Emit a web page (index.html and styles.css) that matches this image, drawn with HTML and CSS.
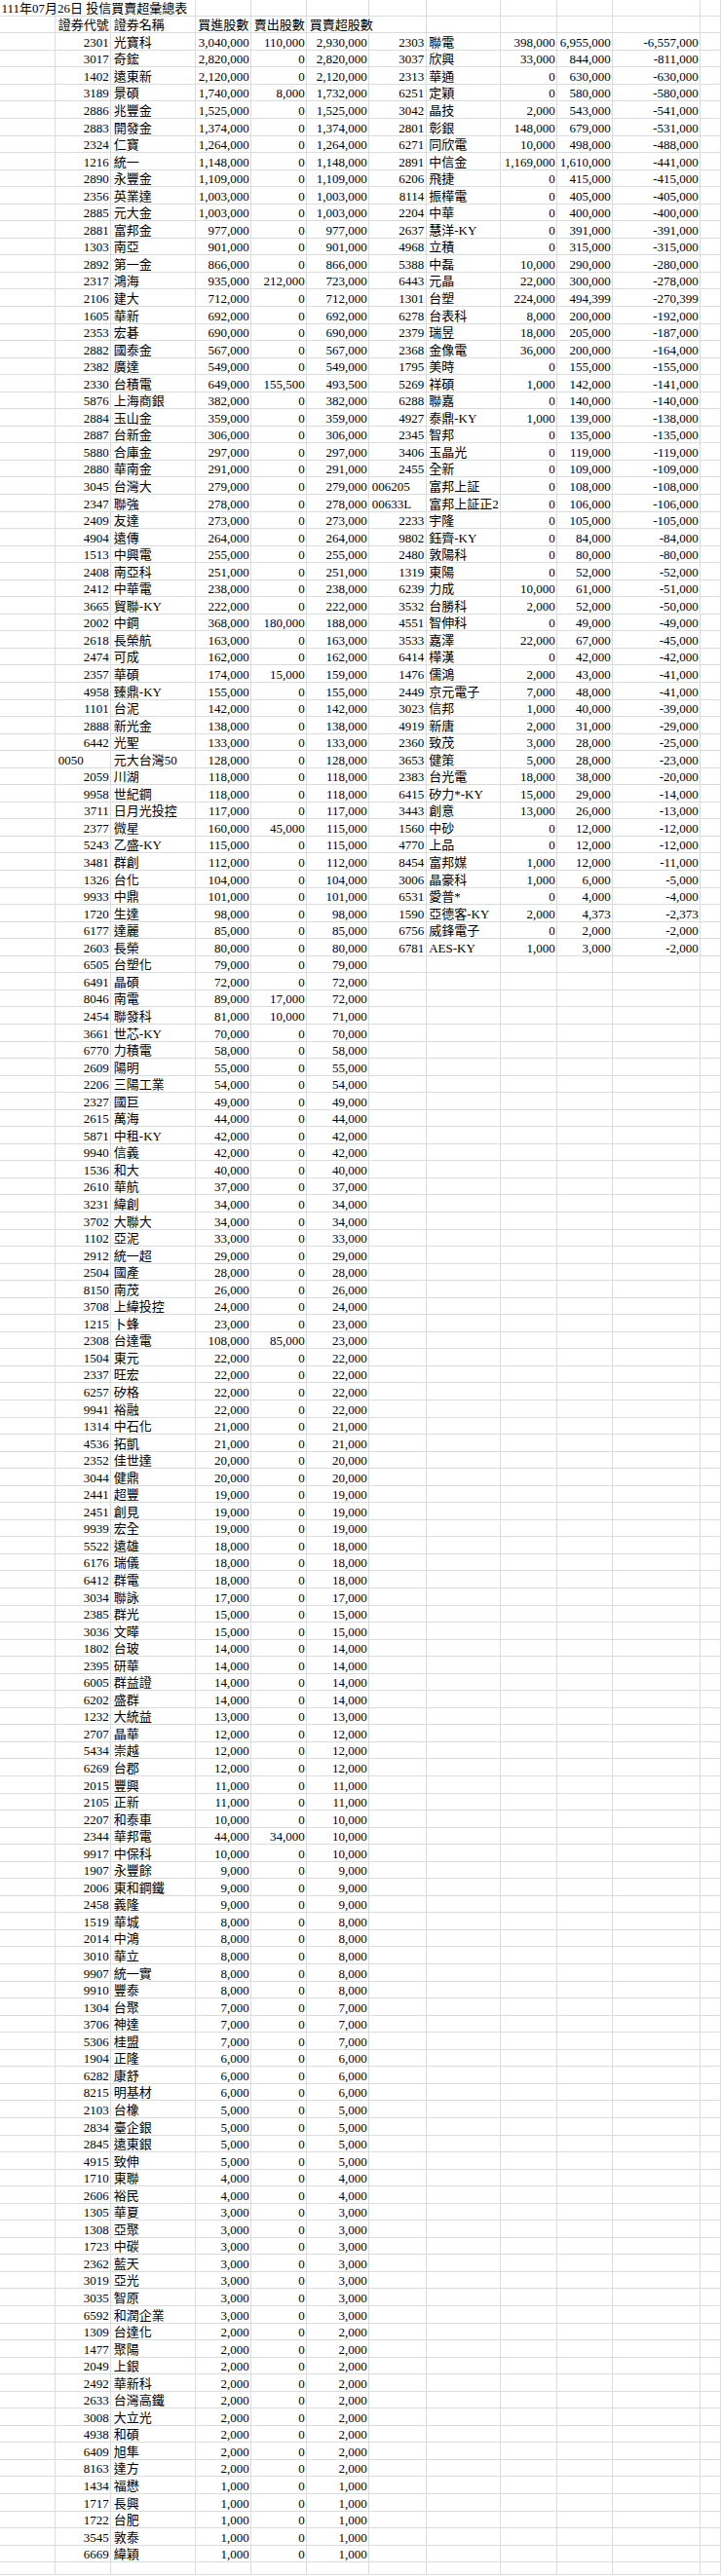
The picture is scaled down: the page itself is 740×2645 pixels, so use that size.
FILE: index.html
```html
<!DOCTYPE html>
<html lang="zh-Hant">
<head>
<meta charset="utf-8">
<title>111年07月26日 投信買賣超彙總表</title>
<link rel="stylesheet" href="styles.css">
</head>
<body>
<div class="sheet">
<span class="title">111年07月26日 投信買賣超彙總表</span><span></span><span></span><span></span><span></span><span></span><span></span><span></span><span></span><span></span>
<span></span><span class="t">證券代號</span><span class="t">證券名稱</span><span class="t">買進股數</span><span class="t">賣出股數</span><span class="t hw">買賣超股數</span><span></span><span></span><span></span><span></span><span></span>
<span></span><span>2301</span><span class="t">光寶科</span><span>3,040,000</span><span>110,000</span><span>2,930,000</span><span>2303</span><span class="t">聯電</span><span>398,000</span><span>6,955,000</span><span>-6,557,000</span><span></span>
<span></span><span>3017</span><span class="t">奇鋐</span><span>2,820,000</span><span>0</span><span>2,820,000</span><span>3037</span><span class="t">欣興</span><span>33,000</span><span>844,000</span><span>-811,000</span><span></span>
<span></span><span>1402</span><span class="t">遠東新</span><span>2,120,000</span><span>0</span><span>2,120,000</span><span>2313</span><span class="t">華通</span><span>0</span><span>630,000</span><span>-630,000</span><span></span>
<span></span><span>3189</span><span class="t">景碩</span><span>1,740,000</span><span>8,000</span><span>1,732,000</span><span>6251</span><span class="t">定穎</span><span>0</span><span>580,000</span><span>-580,000</span><span></span>
<span></span><span>2886</span><span class="t">兆豐金</span><span>1,525,000</span><span>0</span><span>1,525,000</span><span>3042</span><span class="t">晶技</span><span>2,000</span><span>543,000</span><span>-541,000</span><span></span>
<span></span><span>2883</span><span class="t">開發金</span><span>1,374,000</span><span>0</span><span>1,374,000</span><span>2801</span><span class="t">彰銀</span><span>148,000</span><span>679,000</span><span>-531,000</span><span></span>
<span></span><span>2324</span><span class="t">仁寶</span><span>1,264,000</span><span>0</span><span>1,264,000</span><span>6271</span><span class="t">同欣電</span><span>10,000</span><span>498,000</span><span>-488,000</span><span></span>
<span></span><span>1216</span><span class="t">統一</span><span>1,148,000</span><span>0</span><span>1,148,000</span><span>2891</span><span class="t">中信金</span><span>1,169,000</span><span>1,610,000</span><span>-441,000</span><span></span>
<span></span><span>2890</span><span class="t">永豐金</span><span>1,109,000</span><span>0</span><span>1,109,000</span><span>6206</span><span class="t">飛捷</span><span>0</span><span>415,000</span><span>-415,000</span><span></span>
<span></span><span>2356</span><span class="t">英業達</span><span>1,003,000</span><span>0</span><span>1,003,000</span><span>8114</span><span class="t">振樺電</span><span>0</span><span>405,000</span><span>-405,000</span><span></span>
<span></span><span>2885</span><span class="t">元大金</span><span>1,003,000</span><span>0</span><span>1,003,000</span><span>2204</span><span class="t">中華</span><span>0</span><span>400,000</span><span>-400,000</span><span></span>
<span></span><span>2881</span><span class="t">富邦金</span><span>977,000</span><span>0</span><span>977,000</span><span>2637</span><span class="t">慧洋-KY</span><span>0</span><span>391,000</span><span>-391,000</span><span></span>
<span></span><span>1303</span><span class="t">南亞</span><span>901,000</span><span>0</span><span>901,000</span><span>4968</span><span class="t">立積</span><span>0</span><span>315,000</span><span>-315,000</span><span></span>
<span></span><span>2892</span><span class="t">第一金</span><span>866,000</span><span>0</span><span>866,000</span><span>5388</span><span class="t">中磊</span><span>10,000</span><span>290,000</span><span>-280,000</span><span></span>
<span></span><span>2317</span><span class="t">鴻海</span><span>935,000</span><span>212,000</span><span>723,000</span><span>6443</span><span class="t">元晶</span><span>22,000</span><span>300,000</span><span>-278,000</span><span></span>
<span></span><span>2106</span><span class="t">建大</span><span>712,000</span><span>0</span><span>712,000</span><span>1301</span><span class="t">台塑</span><span>224,000</span><span>494,399</span><span>-270,399</span><span></span>
<span></span><span>1605</span><span class="t">華新</span><span>692,000</span><span>0</span><span>692,000</span><span>6278</span><span class="t">台表科</span><span>8,000</span><span>200,000</span><span>-192,000</span><span></span>
<span></span><span>2353</span><span class="t">宏碁</span><span>690,000</span><span>0</span><span>690,000</span><span>2379</span><span class="t">瑞昱</span><span>18,000</span><span>205,000</span><span>-187,000</span><span></span>
<span></span><span>2882</span><span class="t">國泰金</span><span>567,000</span><span>0</span><span>567,000</span><span>2368</span><span class="t">金像電</span><span>36,000</span><span>200,000</span><span>-164,000</span><span></span>
<span></span><span>2382</span><span class="t">廣達</span><span>549,000</span><span>0</span><span>549,000</span><span>1795</span><span class="t">美時</span><span>0</span><span>155,000</span><span>-155,000</span><span></span>
<span></span><span>2330</span><span class="t">台積電</span><span>649,000</span><span>155,500</span><span>493,500</span><span>5269</span><span class="t">祥碩</span><span>1,000</span><span>142,000</span><span>-141,000</span><span></span>
<span></span><span>5876</span><span class="t">上海商銀</span><span>382,000</span><span>0</span><span>382,000</span><span>6288</span><span class="t">聯嘉</span><span>0</span><span>140,000</span><span>-140,000</span><span></span>
<span></span><span>2884</span><span class="t">玉山金</span><span>359,000</span><span>0</span><span>359,000</span><span>4927</span><span class="t">泰鼎-KY</span><span>1,000</span><span>139,000</span><span>-138,000</span><span></span>
<span></span><span>2887</span><span class="t">台新金</span><span>306,000</span><span>0</span><span>306,000</span><span>2345</span><span class="t">智邦</span><span>0</span><span>135,000</span><span>-135,000</span><span></span>
<span></span><span>5880</span><span class="t">合庫金</span><span>297,000</span><span>0</span><span>297,000</span><span>3406</span><span class="t">玉晶光</span><span>0</span><span>119,000</span><span>-119,000</span><span></span>
<span></span><span>2880</span><span class="t">華南金</span><span>291,000</span><span>0</span><span>291,000</span><span>2455</span><span class="t">全新</span><span>0</span><span>109,000</span><span>-109,000</span><span></span>
<span></span><span>3045</span><span class="t">台灣大</span><span>279,000</span><span>0</span><span>279,000</span><span class="t">006205</span><span class="t">富邦上証</span><span>0</span><span>108,000</span><span>-108,000</span><span></span>
<span></span><span>2347</span><span class="t">聯強</span><span>278,000</span><span>0</span><span>278,000</span><span class="t">00633L</span><span class="t">富邦上証正2</span><span>0</span><span>106,000</span><span>-106,000</span><span></span>
<span></span><span>2409</span><span class="t">友達</span><span>273,000</span><span>0</span><span>273,000</span><span>2233</span><span class="t">宇隆</span><span>0</span><span>105,000</span><span>-105,000</span><span></span>
<span></span><span>4904</span><span class="t">遠傳</span><span>264,000</span><span>0</span><span>264,000</span><span>9802</span><span class="t">鈺齊-KY</span><span>0</span><span>84,000</span><span>-84,000</span><span></span>
<span></span><span>1513</span><span class="t">中興電</span><span>255,000</span><span>0</span><span>255,000</span><span>2480</span><span class="t">敦陽科</span><span>0</span><span>80,000</span><span>-80,000</span><span></span>
<span></span><span>2408</span><span class="t">南亞科</span><span>251,000</span><span>0</span><span>251,000</span><span>1319</span><span class="t">東陽</span><span>0</span><span>52,000</span><span>-52,000</span><span></span>
<span></span><span>2412</span><span class="t">中華電</span><span>238,000</span><span>0</span><span>238,000</span><span>6239</span><span class="t">力成</span><span>10,000</span><span>61,000</span><span>-51,000</span><span></span>
<span></span><span>3665</span><span class="t">貿聯-KY</span><span>222,000</span><span>0</span><span>222,000</span><span>3532</span><span class="t">台勝科</span><span>2,000</span><span>52,000</span><span>-50,000</span><span></span>
<span></span><span>2002</span><span class="t">中鋼</span><span>368,000</span><span>180,000</span><span>188,000</span><span>4551</span><span class="t">智伸科</span><span>0</span><span>49,000</span><span>-49,000</span><span></span>
<span></span><span>2618</span><span class="t">長榮航</span><span>163,000</span><span>0</span><span>163,000</span><span>3533</span><span class="t">嘉澤</span><span>22,000</span><span>67,000</span><span>-45,000</span><span></span>
<span></span><span>2474</span><span class="t">可成</span><span>162,000</span><span>0</span><span>162,000</span><span>6414</span><span class="t">樺漢</span><span>0</span><span>42,000</span><span>-42,000</span><span></span>
<span></span><span>2357</span><span class="t">華碩</span><span>174,000</span><span>15,000</span><span>159,000</span><span>1476</span><span class="t">儒鴻</span><span>2,000</span><span>43,000</span><span>-41,000</span><span></span>
<span></span><span>4958</span><span class="t">臻鼎-KY</span><span>155,000</span><span>0</span><span>155,000</span><span>2449</span><span class="t">京元電子</span><span>7,000</span><span>48,000</span><span>-41,000</span><span></span>
<span></span><span>1101</span><span class="t">台泥</span><span>142,000</span><span>0</span><span>142,000</span><span>3023</span><span class="t">信邦</span><span>1,000</span><span>40,000</span><span>-39,000</span><span></span>
<span></span><span>2888</span><span class="t">新光金</span><span>138,000</span><span>0</span><span>138,000</span><span>4919</span><span class="t">新唐</span><span>2,000</span><span>31,000</span><span>-29,000</span><span></span>
<span></span><span>6442</span><span class="t">光聖</span><span>133,000</span><span>0</span><span>133,000</span><span>2360</span><span class="t">致茂</span><span>3,000</span><span>28,000</span><span>-25,000</span><span></span>
<span></span><span class="t">0050</span><span class="t">元大台灣50</span><span>128,000</span><span>0</span><span>128,000</span><span>3653</span><span class="t">健策</span><span>5,000</span><span>28,000</span><span>-23,000</span><span></span>
<span></span><span>2059</span><span class="t">川湖</span><span>118,000</span><span>0</span><span>118,000</span><span>2383</span><span class="t">台光電</span><span>18,000</span><span>38,000</span><span>-20,000</span><span></span>
<span></span><span>9958</span><span class="t">世紀鋼</span><span>118,000</span><span>0</span><span>118,000</span><span>6415</span><span class="t">矽力*-KY</span><span>15,000</span><span>29,000</span><span>-14,000</span><span></span>
<span></span><span>3711</span><span class="t">日月光投控</span><span>117,000</span><span>0</span><span>117,000</span><span>3443</span><span class="t">創意</span><span>13,000</span><span>26,000</span><span>-13,000</span><span></span>
<span></span><span>2377</span><span class="t">微星</span><span>160,000</span><span>45,000</span><span>115,000</span><span>1560</span><span class="t">中砂</span><span>0</span><span>12,000</span><span>-12,000</span><span></span>
<span></span><span>5243</span><span class="t">乙盛-KY</span><span>115,000</span><span>0</span><span>115,000</span><span>4770</span><span class="t">上品</span><span>0</span><span>12,000</span><span>-12,000</span><span></span>
<span></span><span>3481</span><span class="t">群創</span><span>112,000</span><span>0</span><span>112,000</span><span>8454</span><span class="t">富邦媒</span><span>1,000</span><span>12,000</span><span>-11,000</span><span></span>
<span></span><span>1326</span><span class="t">台化</span><span>104,000</span><span>0</span><span>104,000</span><span>3006</span><span class="t">晶豪科</span><span>1,000</span><span>6,000</span><span>-5,000</span><span></span>
<span></span><span>9933</span><span class="t">中鼎</span><span>101,000</span><span>0</span><span>101,000</span><span>6531</span><span class="t">愛普*</span><span>0</span><span>4,000</span><span>-4,000</span><span></span>
<span></span><span>1720</span><span class="t">生達</span><span>98,000</span><span>0</span><span>98,000</span><span>1590</span><span class="t">亞德客-KY</span><span>2,000</span><span>4,373</span><span>-2,373</span><span></span>
<span></span><span>6177</span><span class="t">達麗</span><span>85,000</span><span>0</span><span>85,000</span><span>6756</span><span class="t">威鋒電子</span><span>0</span><span>2,000</span><span>-2,000</span><span></span>
<span></span><span>2603</span><span class="t">長榮</span><span>80,000</span><span>0</span><span>80,000</span><span>6781</span><span class="t">AES-KY</span><span>1,000</span><span>3,000</span><span>-2,000</span><span></span>
<span></span><span>6505</span><span class="t">台塑化</span><span>79,000</span><span>0</span><span>79,000</span><span></span><span></span><span></span><span></span><span></span><span></span>
<span></span><span>6491</span><span class="t">晶碩</span><span>72,000</span><span>0</span><span>72,000</span><span></span><span></span><span></span><span></span><span></span><span></span>
<span></span><span>8046</span><span class="t">南電</span><span>89,000</span><span>17,000</span><span>72,000</span><span></span><span></span><span></span><span></span><span></span><span></span>
<span></span><span>2454</span><span class="t">聯發科</span><span>81,000</span><span>10,000</span><span>71,000</span><span></span><span></span><span></span><span></span><span></span><span></span>
<span></span><span>3661</span><span class="t">世芯-KY</span><span>70,000</span><span>0</span><span>70,000</span><span></span><span></span><span></span><span></span><span></span><span></span>
<span></span><span>6770</span><span class="t">力積電</span><span>58,000</span><span>0</span><span>58,000</span><span></span><span></span><span></span><span></span><span></span><span></span>
<span></span><span>2609</span><span class="t">陽明</span><span>55,000</span><span>0</span><span>55,000</span><span></span><span></span><span></span><span></span><span></span><span></span>
<span></span><span>2206</span><span class="t">三陽工業</span><span>54,000</span><span>0</span><span>54,000</span><span></span><span></span><span></span><span></span><span></span><span></span>
<span></span><span>2327</span><span class="t">國巨</span><span>49,000</span><span>0</span><span>49,000</span><span></span><span></span><span></span><span></span><span></span><span></span>
<span></span><span>2615</span><span class="t">萬海</span><span>44,000</span><span>0</span><span>44,000</span><span></span><span></span><span></span><span></span><span></span><span></span>
<span></span><span>5871</span><span class="t">中租-KY</span><span>42,000</span><span>0</span><span>42,000</span><span></span><span></span><span></span><span></span><span></span><span></span>
<span></span><span>9940</span><span class="t">信義</span><span>42,000</span><span>0</span><span>42,000</span><span></span><span></span><span></span><span></span><span></span><span></span>
<span></span><span>1536</span><span class="t">和大</span><span>40,000</span><span>0</span><span>40,000</span><span></span><span></span><span></span><span></span><span></span><span></span>
<span></span><span>2610</span><span class="t">華航</span><span>37,000</span><span>0</span><span>37,000</span><span></span><span></span><span></span><span></span><span></span><span></span>
<span></span><span>3231</span><span class="t">緯創</span><span>34,000</span><span>0</span><span>34,000</span><span></span><span></span><span></span><span></span><span></span><span></span>
<span></span><span>3702</span><span class="t">大聯大</span><span>34,000</span><span>0</span><span>34,000</span><span></span><span></span><span></span><span></span><span></span><span></span>
<span></span><span>1102</span><span class="t">亞泥</span><span>33,000</span><span>0</span><span>33,000</span><span></span><span></span><span></span><span></span><span></span><span></span>
<span></span><span>2912</span><span class="t">統一超</span><span>29,000</span><span>0</span><span>29,000</span><span></span><span></span><span></span><span></span><span></span><span></span>
<span></span><span>2504</span><span class="t">國產</span><span>28,000</span><span>0</span><span>28,000</span><span></span><span></span><span></span><span></span><span></span><span></span>
<span></span><span>8150</span><span class="t">南茂</span><span>26,000</span><span>0</span><span>26,000</span><span></span><span></span><span></span><span></span><span></span><span></span>
<span></span><span>3708</span><span class="t">上緯投控</span><span>24,000</span><span>0</span><span>24,000</span><span></span><span></span><span></span><span></span><span></span><span></span>
<span></span><span>1215</span><span class="t">卜蜂</span><span>23,000</span><span>0</span><span>23,000</span><span></span><span></span><span></span><span></span><span></span><span></span>
<span></span><span>2308</span><span class="t">台達電</span><span>108,000</span><span>85,000</span><span>23,000</span><span></span><span></span><span></span><span></span><span></span><span></span>
<span></span><span>1504</span><span class="t">東元</span><span>22,000</span><span>0</span><span>22,000</span><span></span><span></span><span></span><span></span><span></span><span></span>
<span></span><span>2337</span><span class="t">旺宏</span><span>22,000</span><span>0</span><span>22,000</span><span></span><span></span><span></span><span></span><span></span><span></span>
<span></span><span>6257</span><span class="t">矽格</span><span>22,000</span><span>0</span><span>22,000</span><span></span><span></span><span></span><span></span><span></span><span></span>
<span></span><span>9941</span><span class="t">裕融</span><span>22,000</span><span>0</span><span>22,000</span><span></span><span></span><span></span><span></span><span></span><span></span>
<span></span><span>1314</span><span class="t">中石化</span><span>21,000</span><span>0</span><span>21,000</span><span></span><span></span><span></span><span></span><span></span><span></span>
<span></span><span>4536</span><span class="t">拓凱</span><span>21,000</span><span>0</span><span>21,000</span><span></span><span></span><span></span><span></span><span></span><span></span>
<span></span><span>2352</span><span class="t">佳世達</span><span>20,000</span><span>0</span><span>20,000</span><span></span><span></span><span></span><span></span><span></span><span></span>
<span></span><span>3044</span><span class="t">健鼎</span><span>20,000</span><span>0</span><span>20,000</span><span></span><span></span><span></span><span></span><span></span><span></span>
<span></span><span>2441</span><span class="t">超豐</span><span>19,000</span><span>0</span><span>19,000</span><span></span><span></span><span></span><span></span><span></span><span></span>
<span></span><span>2451</span><span class="t">創見</span><span>19,000</span><span>0</span><span>19,000</span><span></span><span></span><span></span><span></span><span></span><span></span>
<span></span><span>9939</span><span class="t">宏全</span><span>19,000</span><span>0</span><span>19,000</span><span></span><span></span><span></span><span></span><span></span><span></span>
<span></span><span>5522</span><span class="t">遠雄</span><span>18,000</span><span>0</span><span>18,000</span><span></span><span></span><span></span><span></span><span></span><span></span>
<span></span><span>6176</span><span class="t">瑞儀</span><span>18,000</span><span>0</span><span>18,000</span><span></span><span></span><span></span><span></span><span></span><span></span>
<span></span><span>6412</span><span class="t">群電</span><span>18,000</span><span>0</span><span>18,000</span><span></span><span></span><span></span><span></span><span></span><span></span>
<span></span><span>3034</span><span class="t">聯詠</span><span>17,000</span><span>0</span><span>17,000</span><span></span><span></span><span></span><span></span><span></span><span></span>
<span></span><span>2385</span><span class="t">群光</span><span>15,000</span><span>0</span><span>15,000</span><span></span><span></span><span></span><span></span><span></span><span></span>
<span></span><span>3036</span><span class="t">文曄</span><span>15,000</span><span>0</span><span>15,000</span><span></span><span></span><span></span><span></span><span></span><span></span>
<span></span><span>1802</span><span class="t">台玻</span><span>14,000</span><span>0</span><span>14,000</span><span></span><span></span><span></span><span></span><span></span><span></span>
<span></span><span>2395</span><span class="t">研華</span><span>14,000</span><span>0</span><span>14,000</span><span></span><span></span><span></span><span></span><span></span><span></span>
<span></span><span>6005</span><span class="t">群益證</span><span>14,000</span><span>0</span><span>14,000</span><span></span><span></span><span></span><span></span><span></span><span></span>
<span></span><span>6202</span><span class="t">盛群</span><span>14,000</span><span>0</span><span>14,000</span><span></span><span></span><span></span><span></span><span></span><span></span>
<span></span><span>1232</span><span class="t">大統益</span><span>13,000</span><span>0</span><span>13,000</span><span></span><span></span><span></span><span></span><span></span><span></span>
<span></span><span>2707</span><span class="t">晶華</span><span>12,000</span><span>0</span><span>12,000</span><span></span><span></span><span></span><span></span><span></span><span></span>
<span></span><span>5434</span><span class="t">崇越</span><span>12,000</span><span>0</span><span>12,000</span><span></span><span></span><span></span><span></span><span></span><span></span>
<span></span><span>6269</span><span class="t">台郡</span><span>12,000</span><span>0</span><span>12,000</span><span></span><span></span><span></span><span></span><span></span><span></span>
<span></span><span>2015</span><span class="t">豐興</span><span>11,000</span><span>0</span><span>11,000</span><span></span><span></span><span></span><span></span><span></span><span></span>
<span></span><span>2105</span><span class="t">正新</span><span>11,000</span><span>0</span><span>11,000</span><span></span><span></span><span></span><span></span><span></span><span></span>
<span></span><span>2207</span><span class="t">和泰車</span><span>10,000</span><span>0</span><span>10,000</span><span></span><span></span><span></span><span></span><span></span><span></span>
<span></span><span>2344</span><span class="t">華邦電</span><span>44,000</span><span>34,000</span><span>10,000</span><span></span><span></span><span></span><span></span><span></span><span></span>
<span></span><span>9917</span><span class="t">中保科</span><span>10,000</span><span>0</span><span>10,000</span><span></span><span></span><span></span><span></span><span></span><span></span>
<span></span><span>1907</span><span class="t">永豐餘</span><span>9,000</span><span>0</span><span>9,000</span><span></span><span></span><span></span><span></span><span></span><span></span>
<span></span><span>2006</span><span class="t">東和鋼鐵</span><span>9,000</span><span>0</span><span>9,000</span><span></span><span></span><span></span><span></span><span></span><span></span>
<span></span><span>2458</span><span class="t">義隆</span><span>9,000</span><span>0</span><span>9,000</span><span></span><span></span><span></span><span></span><span></span><span></span>
<span></span><span>1519</span><span class="t">華城</span><span>8,000</span><span>0</span><span>8,000</span><span></span><span></span><span></span><span></span><span></span><span></span>
<span></span><span>2014</span><span class="t">中鴻</span><span>8,000</span><span>0</span><span>8,000</span><span></span><span></span><span></span><span></span><span></span><span></span>
<span></span><span>3010</span><span class="t">華立</span><span>8,000</span><span>0</span><span>8,000</span><span></span><span></span><span></span><span></span><span></span><span></span>
<span></span><span>9907</span><span class="t">統一實</span><span>8,000</span><span>0</span><span>8,000</span><span></span><span></span><span></span><span></span><span></span><span></span>
<span></span><span>9910</span><span class="t">豐泰</span><span>8,000</span><span>0</span><span>8,000</span><span></span><span></span><span></span><span></span><span></span><span></span>
<span></span><span>1304</span><span class="t">台聚</span><span>7,000</span><span>0</span><span>7,000</span><span></span><span></span><span></span><span></span><span></span><span></span>
<span></span><span>3706</span><span class="t">神達</span><span>7,000</span><span>0</span><span>7,000</span><span></span><span></span><span></span><span></span><span></span><span></span>
<span></span><span>5306</span><span class="t">桂盟</span><span>7,000</span><span>0</span><span>7,000</span><span></span><span></span><span></span><span></span><span></span><span></span>
<span></span><span>1904</span><span class="t">正隆</span><span>6,000</span><span>0</span><span>6,000</span><span></span><span></span><span></span><span></span><span></span><span></span>
<span></span><span>6282</span><span class="t">康舒</span><span>6,000</span><span>0</span><span>6,000</span><span></span><span></span><span></span><span></span><span></span><span></span>
<span></span><span>8215</span><span class="t">明基材</span><span>6,000</span><span>0</span><span>6,000</span><span></span><span></span><span></span><span></span><span></span><span></span>
<span></span><span>2103</span><span class="t">台橡</span><span>5,000</span><span>0</span><span>5,000</span><span></span><span></span><span></span><span></span><span></span><span></span>
<span></span><span>2834</span><span class="t">臺企銀</span><span>5,000</span><span>0</span><span>5,000</span><span></span><span></span><span></span><span></span><span></span><span></span>
<span></span><span>2845</span><span class="t">遠東銀</span><span>5,000</span><span>0</span><span>5,000</span><span></span><span></span><span></span><span></span><span></span><span></span>
<span></span><span>4915</span><span class="t">致伸</span><span>5,000</span><span>0</span><span>5,000</span><span></span><span></span><span></span><span></span><span></span><span></span>
<span></span><span>1710</span><span class="t">東聯</span><span>4,000</span><span>0</span><span>4,000</span><span></span><span></span><span></span><span></span><span></span><span></span>
<span></span><span>2606</span><span class="t">裕民</span><span>4,000</span><span>0</span><span>4,000</span><span></span><span></span><span></span><span></span><span></span><span></span>
<span></span><span>1305</span><span class="t">華夏</span><span>3,000</span><span>0</span><span>3,000</span><span></span><span></span><span></span><span></span><span></span><span></span>
<span></span><span>1308</span><span class="t">亞聚</span><span>3,000</span><span>0</span><span>3,000</span><span></span><span></span><span></span><span></span><span></span><span></span>
<span></span><span>1723</span><span class="t">中碳</span><span>3,000</span><span>0</span><span>3,000</span><span></span><span></span><span></span><span></span><span></span><span></span>
<span></span><span>2362</span><span class="t">藍天</span><span>3,000</span><span>0</span><span>3,000</span><span></span><span></span><span></span><span></span><span></span><span></span>
<span></span><span>3019</span><span class="t">亞光</span><span>3,000</span><span>0</span><span>3,000</span><span></span><span></span><span></span><span></span><span></span><span></span>
<span></span><span>3035</span><span class="t">智原</span><span>3,000</span><span>0</span><span>3,000</span><span></span><span></span><span></span><span></span><span></span><span></span>
<span></span><span>6592</span><span class="t">和潤企業</span><span>3,000</span><span>0</span><span>3,000</span><span></span><span></span><span></span><span></span><span></span><span></span>
<span></span><span>1309</span><span class="t">台達化</span><span>2,000</span><span>0</span><span>2,000</span><span></span><span></span><span></span><span></span><span></span><span></span>
<span></span><span>1477</span><span class="t">聚陽</span><span>2,000</span><span>0</span><span>2,000</span><span></span><span></span><span></span><span></span><span></span><span></span>
<span></span><span>2049</span><span class="t">上銀</span><span>2,000</span><span>0</span><span>2,000</span><span></span><span></span><span></span><span></span><span></span><span></span>
<span></span><span>2492</span><span class="t">華新科</span><span>2,000</span><span>0</span><span>2,000</span><span></span><span></span><span></span><span></span><span></span><span></span>
<span></span><span>2633</span><span class="t">台灣高鐵</span><span>2,000</span><span>0</span><span>2,000</span><span></span><span></span><span></span><span></span><span></span><span></span>
<span></span><span>3008</span><span class="t">大立光</span><span>2,000</span><span>0</span><span>2,000</span><span></span><span></span><span></span><span></span><span></span><span></span>
<span></span><span>4938</span><span class="t">和碩</span><span>2,000</span><span>0</span><span>2,000</span><span></span><span></span><span></span><span></span><span></span><span></span>
<span></span><span>6409</span><span class="t">旭隼</span><span>2,000</span><span>0</span><span>2,000</span><span></span><span></span><span></span><span></span><span></span><span></span>
<span></span><span>8163</span><span class="t">達方</span><span>2,000</span><span>0</span><span>2,000</span><span></span><span></span><span></span><span></span><span></span><span></span>
<span></span><span>1434</span><span class="t">福懋</span><span>1,000</span><span>0</span><span>1,000</span><span></span><span></span><span></span><span></span><span></span><span></span>
<span></span><span>1717</span><span class="t">長興</span><span>1,000</span><span>0</span><span>1,000</span><span></span><span></span><span></span><span></span><span></span><span></span>
<span></span><span>1722</span><span class="t">台肥</span><span>1,000</span><span>0</span><span>1,000</span><span></span><span></span><span></span><span></span><span></span><span></span>
<span></span><span>3545</span><span class="t">敦泰</span><span>1,000</span><span>0</span><span>1,000</span><span></span><span></span><span></span><span></span><span></span><span></span>
<span></span><span>6669</span><span class="t">緯穎</span><span>1,000</span><span>0</span><span>1,000</span><span></span><span></span><span></span><span></span><span></span><span></span>
<span></span><span></span><span></span><span></span><span></span><span></span><span></span><span></span><span></span><span></span><span></span><span></span>
</div>
</body>
</html>
```

FILE: styles.css
```css
html,
body {
  margin: 0;
  padding: 0;
  background: #ffffff;
  overflow: hidden;
}

.sheet {
  display: grid;
  grid-template-columns: 57.3px 57px 86.4px 57.6px 57px 64px 58.4px 76.6px 58px 57px 90px 20.7px;
  grid-template-rows: 16.7px repeat(149, 17.555px) 13px;
  width: 740px;
  font-family: "Liberation Serif", "Noto Sans CJK TC", serif;
  font-size: 13px;
  color: #000000;
}

.sheet > span {
  display: flex;
  align-items: flex-end;
  justify-content: flex-end;
  min-width: 0;
  border-right: 1px solid #dadcdd;
  border-bottom: 1px solid #dadcdd;
  padding: 0 1.5px 1px 2.5px;
  line-height: 12px;
  white-space: nowrap;
  overflow: visible;
}

.sheet > .t {
  justify-content: flex-start;
}

.sheet > .title {
  grid-column: span 3;
  justify-content: flex-start;
  padding-left: 1.5px;
}

.sheet > .hw {
  grid-column: span 2;
}
```
